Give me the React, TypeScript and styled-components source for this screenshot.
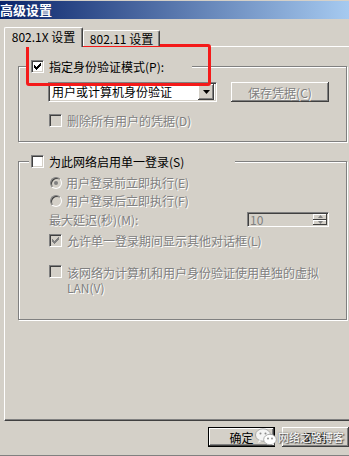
import styled, { createGlobalStyle } from 'styled-components';

const GlobalStyle = createGlobalStyle`
  html, body {
    margin: 0;
    padding: 0;
    background: #d4d0c8;
  }
  body {
    font-family: "Noto Sans CJK SC", "Noto Sans", sans-serif;
    font-size: 12px;
  }
`;

const Window = styled.div`
  position: relative;
  box-sizing: border-box;
  width: 349px;
  height: 456px;
  overflow: hidden;
  background: #d4d0c8;
  border-bottom: 1px solid #808080;
  color: #000;
`;

const TitleBar = styled.div`
  box-sizing: border-box;
  height: 19px;
  border-top: 1px solid #d4d0c8;
  background: linear-gradient(to right, #0a246a, #a6caf0);
  color: #fff;
  font-weight: bold;
  font-size: 13px;
  line-height: 17px;
`;

const TabStrip = styled.div`
  position: relative;
  z-index: 1;
  display: flex;
  align-items: flex-end;
  height: 19px;
  margin-top: 8px;
  padding-left: 4px;
`;

const Tab = styled.div<{ $active?: boolean; $w: number }>`
  box-sizing: border-box;
  width: ${p => p.$w}px;
  height: ${p => (p.$active ? 20 : 16)}px;
  margin-bottom: ${p => (p.$active ? -1 : 0)}px;
  padding-bottom: ${p => (p.$active ? 2 : 0)}px;
  background: #d4d0c8;
  border-top: 1px solid #fff;
  border-left: 1px solid #fff;
  border-right: 1px solid #404040;
  border-radius: 2px 2px 0 0;
  box-shadow: inset -1px 0 #808080;
  display: flex;
  align-items: center;
  justify-content: center;
  line-height: 13px;
  white-space: nowrap;
`;

const Panel = styled.div`
  box-sizing: border-box;
  width: 357px;
  height: 375px;
  margin-left: 4px;
  padding: 13px 0 0 13px;
  border-top: 1px solid #fff;
  border-left: 1px solid #fff;
  border-bottom: 1px solid #404040;
  box-shadow: inset 0 -1px #808080;
`;

const Group = styled.fieldset`
  box-sizing: border-box;
  width: 329px;
  min-inline-size: 0;
  margin: 0;
  padding: 0;
  border: 1px solid #808080;
  box-shadow: inset 1px 1px #fff, 1px 1px #fff;

  & + & {
    margin-top: 13px;
  }
`;

const GroupBody = styled.div<{ $pt: number; $pb: number; $pl: number }>`
  padding: ${p => p.$pt}px 17px ${p => p.$pb}px ${p => p.$pl}px;
`;

const Legend = styled.legend<{ $w: number }>`
  box-sizing: border-box;
  display: flex;
  align-items: center;
  gap: 5px;
  width: ${p => p.$w}px;
  height: 13px;
  margin-left: 10px;
  padding: 0 2px;
  background: #d4d0c8;
  line-height: 13px;
  white-space: nowrap;
`;

const Row = styled.div<{ $top?: number; $gap?: number; $spread?: boolean; $start?: boolean; $indent?: number }>`
  display: flex;
  align-items: ${p => (p.$start ? 'flex-start' : 'center')};
  justify-content: ${p => (p.$spread ? 'space-between' : 'flex-start')};
  gap: ${p => p.$gap ?? 5}px;
  margin-top: ${p => p.$top ?? 0}px;
  margin-left: ${p => p.$indent ?? 0}px;
`;

const Label = styled.span<{ $disabled?: boolean; $lh?: number }>`
  color: ${p => (p.$disabled ? '#808080' : '#000')};
  text-shadow: ${p => (p.$disabled ? '1px 1px 0 #fff' : 'none')};
  line-height: ${p => p.$lh ?? 13}px;
  white-space: nowrap;
`;

const Box = styled.span<{ $disabled?: boolean }>`
  box-sizing: border-box;
  flex: none;
  width: 13px;
  height: 13px;
  display: flex;
  align-items: center;
  justify-content: center;
  background: ${p => (p.$disabled ? '#d4d0c8' : '#fff')};
  border: 1px solid;
  border-color: #808080 #fff #fff #808080;
  box-shadow: inset 1px 1px #404040, inset -1px -1px #d4d0c8;
`;

const RadioCircle = styled.span`
  box-sizing: border-box;
  flex: none;
  width: 12px;
  height: 12px;
  margin-left: 1px;
  border-radius: 50%;
  display: flex;
  align-items: center;
  justify-content: center;
  background: #d4d0c8;
  border: 1px solid;
  border-color: #808080 #fff #fff #808080;
  box-shadow: inset 1px 1px #404040;
`;

const Dot = styled.span`
  width: 4px;
  height: 4px;
  border-radius: 50%;
  background: #808080;
`;

const Combo = styled.div`
  box-sizing: border-box;
  width: 179px;
  height: 20px;
  padding: 2px;
  display: flex;
  align-items: center;
  background: #fff;
  border: 1px solid;
  border-color: #808080 #fff #fff #808080;
  box-shadow: inset 1px 1px #404040, inset -1px -1px #d4d0c8;
`;

const ComboText = styled.span`
  flex: 1;
  padding-left: 1px;
  line-height: 14px;
  white-space: nowrap;
`;

const DropButton = styled.span`
  box-sizing: border-box;
  width: 16px;
  height: 16px;
  display: flex;
  align-items: center;
  justify-content: center;
  background: #d4d0c8;
  box-shadow: inset -1px -1px #404040, inset 1px 1px #fff, inset -2px -2px #808080;
`;

const Button = styled.button<{ $default?: boolean; $w: number; $disabled?: boolean }>`
  box-sizing: border-box;
  width: ${p => p.$w}px;
  height: 20px;
  padding: 0;
  font: inherit;
  line-height: 13px;
  background: #d4d0c8;
  color: ${p => (p.$disabled ? '#808080' : '#000')};
  text-shadow: ${p => (p.$disabled ? '1px 1px 0 #fff' : 'none')};
  border: ${p => (p.$default ? '1px solid #000' : 'none')};
  box-shadow: inset -1px -1px #404040, inset 1px 1px #fff, inset -2px -2px #808080;
  white-space: nowrap;
`;

const Spin = styled.div`
  box-sizing: border-box;
  width: 82px;
  height: 15px;
  padding: 1px 1px 1px 2px;
  display: flex;
  align-items: center;
  background: #d4d0c8;
  border: 1px solid;
  border-color: #808080 #fff #fff #808080;
  box-shadow: inset 1px 1px #404040;
`;

const SpinText = styled.span`
  flex: 1;
  color: #808080;
  line-height: 11px;
`;

const SpinButtons = styled.span`
  display: flex;
  flex-direction: column;
  width: 14px;
  height: 11px;
`;

const SpinHalf = styled.span`
  box-sizing: border-box;
  flex: 1;
  display: flex;
  align-items: center;
  justify-content: center;
  background: #d4d0c8;
  box-shadow: inset -1px -1px #404040, inset 1px 1px #fff;
`;

const Footer = styled.div`
  display: flex;
  gap: 7px;
  margin-top: 6px;
  padding-left: 208px;
`;

/* red annotation drawn over the screenshot */
const Highlight = styled.div`
  position: absolute;
  left: 26px;
  top: 44px;
  box-sizing: border-box;
  width: 185px;
  height: 42px;
  border: 3px solid #f41a1a;
  border-radius: 3px;
  pointer-events: none;
`;

const Watermark = styled.div`
  position: absolute;
  left: 255px;
  top: 428px;
  display: flex;
  align-items: center;
  gap: 1px;
  color: #fff;
  font-size: 11px;
  line-height: 14px;
  text-shadow: 0 0 2px #555, 1px 1px 1px #444;
  white-space: nowrap;
`;

function Check({ disabled }: { disabled?: boolean }) {
  return (
    <svg width="7" height="7" viewBox="0 0 7 7">
      <path d="M0 2h1v1h1v1h1v-1h1v-1h1v-1h1v-1h1v3h-1v1h-1v1h-1v1h-1v1h-1v-1h-1v-1h-1v-1h-1z" fill={disabled ? '#808080' : '#000'} />
    </svg>
  );
}

function CheckBox({ checked, disabled }: { checked?: boolean; disabled?: boolean }) {
  return <Box $disabled={disabled}>{checked && <Check disabled={disabled} />}</Box>;
}

function Arrow({ up, color = '#000', w = 7 }: { up?: boolean; color?: string; w?: number }) {
  const h = Math.ceil(w / 2);
  return (
    <svg width={w} height={h} viewBox={`0 0 ${w} ${h}`}>
      <path d={up ? `M${w / 2} 0L${w} ${h}H0z` : `M0 0H${w}L${w / 2} ${h}z`} fill={color} />
    </svg>
  );
}

function WeChat() {
  return (
    <svg width="22" height="18" viewBox="0 0 22 18">
      <ellipse cx="8" cy="7" rx="7.5" ry="6.2" fill="#f4f4f4" stroke="#9a9a9a" strokeWidth="0.8" />
      <path d="M4 12l-1 3 3.5-2z" fill="#f4f4f4" />
      <circle cx="5.5" cy="5.5" r="1" fill="#8a8a8a" />
      <circle cx="10.5" cy="5.5" r="1" fill="#8a8a8a" />
      <ellipse cx="15" cy="11.5" rx="6.3" ry="5.2" fill="#fff" stroke="#9a9a9a" strokeWidth="0.8" />
      <path d="M18.5 15.5l1.5 2-3.5-1.2z" fill="#fff" />
      <circle cx="13" cy="10.5" r="0.9" fill="#8a8a8a" />
      <circle cx="17" cy="10.5" r="0.9" fill="#8a8a8a" />
    </svg>
  );
}

export default function App() {
  return (
    <Window>
      <GlobalStyle />
      <TitleBar>高级设置</TitleBar>

      <TabStrip>
        <Tab $active $w={79}>802.1X 设置</Tab>
        <Tab $w={77}>802.11 设置</Tab>
      </TabStrip>

      <Panel>
        <Group>
          <Legend $w={163}>
            <CheckBox checked />
            <Label>指定身份验证模式(P):</Label>
          </Legend>
          <GroupBody $pt={9} $pb={14} $pl={29}>
            <Row $gap={14}>
              <Combo>
                <ComboText>用户或计算机身份验证</ComboText>
                <DropButton>
                  <Arrow />
                </DropButton>
              </Combo>
              <Button $w={104} $disabled>保存凭据(C)</Button>
            </Row>
            <Row $top={12} $indent={1}>
              <CheckBox disabled />
              <Label $disabled>删除所有用户的凭据(D)</Label>
            </Row>
          </GroupBody>
        </Group>

        <Group>
          <Legend $w={206}>
            <CheckBox />
            <Label>为此网络启用单一登录(S)</Label>
          </Legend>
          <GroupBody $pt={8} $pb={24} $pl={30}>
            <Row $gap={4}>
              <RadioCircle>
                <Dot />
              </RadioCircle>
              <Label $disabled>用户登录前立即执行(E)</Label>
            </Row>
            <Row $top={5} $gap={4}>
              <RadioCircle />
              <Label $disabled>用户登录后立即执行(F)</Label>
            </Row>
            <Row $top={5} $spread>
              <Label $disabled>最大延迟(秒)(M):</Label>
              <Spin>
                <SpinText>10</SpinText>
                <SpinButtons>
                  <SpinHalf>
                    <Arrow up w={5} color="#808080" />
                  </SpinHalf>
                  <SpinHalf>
                    <Arrow w={5} color="#808080" />
                  </SpinHalf>
                </SpinButtons>
              </Spin>
            </Row>
            <Row $top={7}>
              <CheckBox checked disabled />
              <Label $disabled>允许单一登录期间显示其他对话框(L)</Label>
            </Row>
            <Row $top={18} $start>
              <CheckBox disabled />
              <Label $disabled $lh={15}>
                该网络为计算机和用户身份验证使用单独的虚拟
                <br />
                LAN(V)
              </Label>
            </Row>
          </GroupBody>
        </Group>
      </Panel>

      <Footer>
        <Button $default $w={75}>确定</Button>
        <Button $w={75}>取消</Button>
      </Footer>

      <Highlight />

      <Watermark>
        <WeChat />
        网络之路博客
      </Watermark>
    </Window>
  );
}
